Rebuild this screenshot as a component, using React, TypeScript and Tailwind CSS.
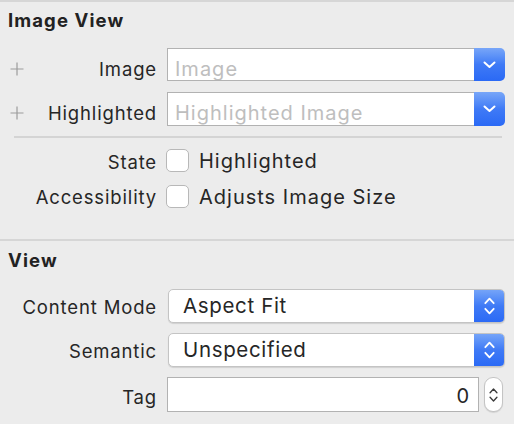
import React from "react";

const DownChevron = () => (
  <svg width="13" height="8" viewBox="0 0 13 8">
    <path d="M1.5 1.5l5 4.5 5-4.5" stroke="white" strokeWidth="2" fill="none" strokeLinecap="round" strokeLinejoin="round" />
  </svg>
);

const UpDown = ({ color = "white", w = 11, sw = 1.8 }: { color?: string; w?: number; sw?: number }) => (
  <svg width={w} height="18" viewBox="0 0 11 18">
    <path d="M1.3 6.2l4.2-4.6 4.2 4.6M1.3 11.8l4.2 4.6 4.2-4.6" stroke={color} strokeWidth={sw} fill="none" strokeLinecap="round" strokeLinejoin="round" />
  </svg>
);

const Plus = () => (
  <svg width="14" height="14" viewBox="0 0 14 14">
    <path d="M7 0.5v13M0.5 7h13" stroke="#9c9c9c" strokeWidth="1.2" />
  </svg>
);

const ComboField = ({ placeholder }: { placeholder: string }) => (
  <div className="flex h-full w-[338px] ml-[10px]">
    <div className="flex-1 bg-white border border-[#b2b2b2] border-r-0 flex items-center pl-[7px] pt-[8px] text-[20px] tracking-[1px] leading-[22px] text-[#bebebe] whitespace-nowrap overflow-hidden">
      {placeholder}
    </div>
    <div className="w-[31px] rounded-r-[5px] bg-linear-to-b from-[#78a6f8] via-[#3f7af6] to-[#2a69f5] flex items-center justify-center">
      <DownChevron />
    </div>
  </div>
);

const Popup = ({ value }: { value: string }) => (
  <div className="flex h-full w-[337px] ml-[11px] rounded-[5px] bg-white border border-[#c4c4c4] shadow-[0_1px_1px_rgba(0,0,0,0.12)] overflow-hidden">
    <div className="flex-1 flex items-center pl-[14px] text-[20.5px] tracking-[0.65px] leading-[24px] text-[#262626]">{value}</div>
    <div className="w-[31px] -my-px -mr-px bg-linear-to-b from-[#78a6f8] via-[#3f7af6] to-[#2a69f5] flex items-center justify-center">
      <UpDown />
    </div>
  </div>
);

const label = "w-[157px] text-right text-[18.5px] tracking-[0.85px] leading-[22px]";

export default function App() {
  return (
    <div className="w-[514px] h-[424px] bg-[#ececec] overflow-hidden flex flex-col font-['Inter','Noto_Sans',sans-serif] text-[#262626]">
      <div className="h-[2px] bg-[#d6d6d6]" />
      <div className="h-[37px] flex items-center pl-[8px] text-[18.5px] tracking-[1.1px] font-bold text-[#222]">Image View</div>

      <div className="flex items-center h-[33px] mt-[9px]">
        <div className="w-[157px] flex items-center pl-[10px] pt-[9px] text-[18.5px] tracking-[0.85px] leading-[22px]">
          <Plus />
          <span className="flex-1 text-right">Image</span>
        </div>
        <ComboField placeholder="Image" />
      </div>

      <div className="flex items-center h-[34px] mt-[11px]">
        <div className="w-[157px] flex items-center pl-[10px] pt-[7px] text-[18.5px] tracking-[0.85px] leading-[22px]">
          <Plus />
          <span className="flex-1 text-right">Highlighted</span>
        </div>
        <ComboField placeholder="Highlighted Image" />
      </div>

      <div className="h-[2px] ml-[14px] mr-[12px] mt-[10px] bg-[#d4d4d4]" />

      <div className="flex items-center h-[24px] mt-[10px]">
        <div className={`${label} pt-[3px]`}>State</div>
        <div className="ml-[9px] w-[23px] h-[23px] rounded-[5px] border border-[#b8b8b8] bg-white" />
        <div className="ml-[10px] pt-[1px] text-[20px] tracking-[1px] leading-[22px]">Highlighted</div>
      </div>

      <div className="flex items-center h-[24px] mt-[12px]">
        <div className={`${label} pt-[2px]`}>Accessibility</div>
        <div className="ml-[9px] w-[23px] h-[23px] rounded-[5px] border border-[#b8b8b8] bg-white" />
        <div className="ml-[10px] pt-[1px] text-[20px] tracking-[1px] leading-[22px]">Adjusts Image Size</div>
      </div>

      <div className="h-[2px] mt-[31px] bg-[#d6d6d6]" />
      <div className="h-[40px] flex items-center pl-[8px] text-[18.5px] tracking-[1.1px] font-bold text-[#222]">View</div>

      <div className="flex items-center h-[34px] mt-[8px]">
        <div className={`${label} pt-[1px]`}>Content Mode</div>
        <Popup value="Aspect Fit" />
      </div>

      <div className="flex items-center h-[34px] mt-[10px]">
        <div className={`${label} pt-[2px]`}>Semantic</div>
        <Popup value="Unspecified" />
      </div>

      <div className="flex items-center h-[35px] mt-[10px]">
        <div className={`${label} pt-[4px]`}>Tag</div>
        <div className="ml-[10px] w-[312px] h-full bg-white border border-[#b2b2b2] flex items-center justify-end pr-[9px] pt-[2px] text-[20px] leading-[24px]">0</div>
        <div className="ml-[5px] w-[19px] h-full rounded-[9px] bg-white border border-[#c4c4c4] shadow-[0_1px_1px_rgba(0,0,0,0.1)] flex items-center justify-center">
          <UpDown color="#3a3a3a" w={9} sw={1.6} />
        </div>
      </div>
    </div>
  );
}
